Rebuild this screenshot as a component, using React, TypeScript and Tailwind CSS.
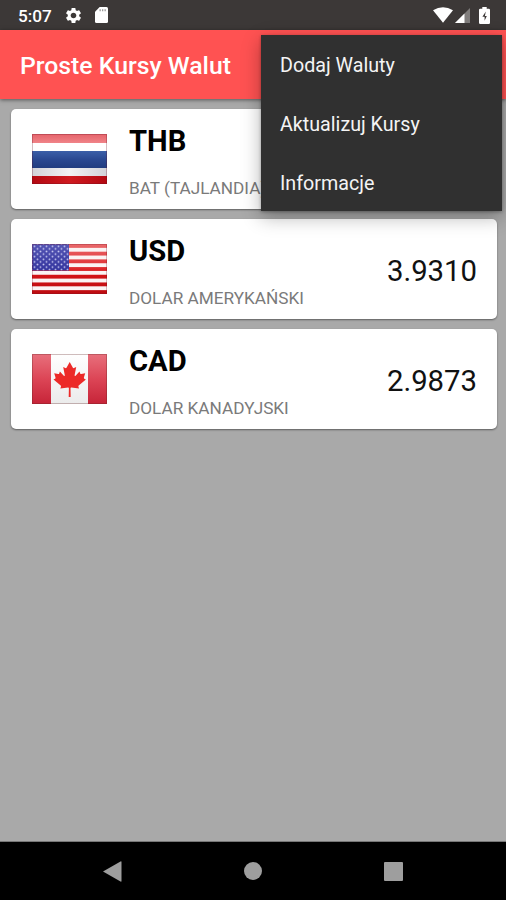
import type { ReactNode } from "react";
import { MdSettings } from "react-icons/md";

function ThaiFlag() {
  return (
    <svg className="block h-[50px] w-[75px]" viewBox="0 0 75 50">
      <defs>
        <linearGradient id="thTop" x1="0" y1="0" x2="0" y2="1">
          <stop offset="0" stopColor="#e5636a" />
          <stop offset="1" stopColor="#f08388" />
        </linearGradient>
        <linearGradient id="thBlue" x1="0" y1="0" x2="0" y2="1">
          <stop offset="0" stopColor="#3b5fa8" />
          <stop offset="0.5" stopColor="#2a4891" />
          <stop offset="1" stopColor="#213c80" />
        </linearGradient>
        <linearGradient id="thRed" x1="0" y1="0" x2="1" y2="0">
          <stop offset="0" stopColor="#b30912" />
          <stop offset="0.5" stopColor="#cf1a20" />
          <stop offset="1" stopColor="#b30912" />
        </linearGradient>
        <linearGradient id="thGrey" x1="0" y1="0" x2="1" y2="0">
          <stop offset="0" stopColor="#d2d2d8" />
          <stop offset="0.5" stopColor="#f2f2f4" />
          <stop offset="1" stopColor="#d2d2d8" />
        </linearGradient>
      </defs>
      <rect width="75" height="50" fill="#fff" />
      <rect width="75" height="9" fill="url(#thTop)" />
      <rect y="17" width="75" height="17" fill="url(#thBlue)" />
      <rect y="34" width="75" height="8" fill="url(#thGrey)" />
      <rect y="42" width="75" height="8" fill="url(#thRed)" />
      <rect x=".5" y=".5" width="74" height="49" fill="none" stroke="#601020" strokeOpacity=".28" />
    </svg>
  );
}

const stripes = [0, 1, 2, 3, 4, 5, 6];

function UsFlag() {
  return (
    <svg className="block h-[50px] w-[75px]" viewBox="0 0 75 50">
      <defs>
        <linearGradient id="usRed" gradientUnits="userSpaceOnUse" x1="0" y1="0" x2="0" y2="50">
          <stop offset="0" stopColor="#ea6a6c" />
          <stop offset="0.45" stopColor="#e03034" />
          <stop offset="0.6" stopColor="#d41316" />
          <stop offset="1" stopColor="#bd0c10" />
        </linearGradient>
        <linearGradient id="usBlue" x1="0" y1="0" x2="0" y2="1">
          <stop offset="0" stopColor="#5556b4" />
          <stop offset="1" stopColor="#34359f" />
        </linearGradient>
        <pattern id="usStars" width="6" height="5.2" patternUnits="userSpaceOnUse" x="1" y="1">
          <circle cx="1.5" cy="1.3" r=".95" fill="#c4c4ee" />
          <circle cx="4.5" cy="3.9" r=".95" fill="#c4c4ee" />
        </pattern>
      </defs>
      <rect width="75" height="50" fill="#fbf3f3" />
      {stripes.map((n) => (
        <rect key={n} y={n * 7.69} width="75" height="3.85" fill="url(#usRed)" />
      ))}
      <rect width="37" height="26.5" fill="url(#usBlue)" />
      <rect width="37" height="26.5" fill="url(#usStars)" />
      <rect x=".5" y=".5" width="74" height="49" fill="none" stroke="#701020" strokeOpacity=".28" />
    </svg>
  );
}

function CanadaFlag() {
  return (
    <svg className="block h-[50px] w-[75px]" viewBox="0 0 75 50">
      <defs>
        <linearGradient id="caRed" x1="0" y1="0" x2="0" y2="1">
          <stop offset="0" stopColor="#e8707c" />
          <stop offset="0.5" stopColor="#dc4556" />
          <stop offset="1" stopColor="#c62438" />
        </linearGradient>
        <linearGradient id="caWhite" x1="0" y1="0" x2="0" y2="1">
          <stop offset="0" stopColor="#fff" />
          <stop offset="1" stopColor="#ebebeb" />
        </linearGradient>
      </defs>
      <rect width="75" height="50" fill="url(#caWhite)" />
      <rect width="19" height="50" fill="url(#caRed)" />
      <rect x="56" width="19" height="50" fill="url(#caRed)" />
      <path
        fill="#ec2a28"
        d="M37.7 8L40.9 13.8Q41.3 14.4 42 14.1L44.2 13L42.6 21.2Q42.6 22.3 43.6 21.7L47.5 17.6L48.2 19.6Q48.5 20.2 49.2 20.1L53.2 19.3L51.9 23.6Q51.7 24.4 52.3 24.7L53.9 25.5L46.7 31.5Q46.2 31.9 46.4 32.5L47 34.5L39.4 33.5Q38.5 33.4 38.5 34.3L38.7 43H36.7L36.9 34.3Q36.9 33.4 36 33.5L28.4 34.5L29 32.5Q29.2 31.9 28.7 31.5L21.5 25.5L23.1 24.7Q23.7 24.4 23.5 23.6L22.2 19.3L26.2 20.1Q26.9 20.2 27.2 19.6L27.9 17.6L31.8 21.7Q32.8 22.3 32.8 21.2L31.2 13L33.4 14.1Q34.1 14.4 34.5 13.8Z"
      />
      <rect x=".5" y=".5" width="74" height="49" fill="none" stroke="#602020" strokeOpacity=".3" />
    </svg>
  );
}

type CardProps = { flag: ReactNode; code: string; name: string; rate: string };

function CurrencyCard({ flag, code, name, rate }: CardProps) {
  return (
    <li className="flex h-[100px] items-center rounded-[5px] bg-white pr-5 pl-[21px] shadow-[0_1px_2px_rgba(0,0,0,0.45)]">
      {flag}
      <div className="ml-[22px] flex h-full flex-1 flex-col pt-[14px] whitespace-nowrap">
        <h2 className="text-[29.2px] leading-[36px] font-bold text-black">{code}</h2>
        <p className="mt-[17px] text-[17.2px] leading-6 text-[#7a7a7a]">{name}</p>
      </div>
      <span className="pt-[3px] text-[29.3px] leading-9 text-[#111]">{rate}</span>
    </li>
  );
}

function StatusBar() {
  return (
    <div className="flex h-[30px] items-center bg-[#3c3837] pr-4 pl-[18px] text-white">
      <span className="pt-[2px] text-[17.2px] leading-7 font-medium">5:07</span>
      <MdSettings className="ml-[12px] size-[19px]" />
      <svg className="ml-[12px] h-4 w-[13px]" viewBox="0 0 13 16" fill="currentColor">
        <path d="M4.7 0H11.5Q13 0 13 1.5V14.5Q13 16 11.5 16H1.5Q0 16 0 14.5V4.8Z" />
        <path d="M4.5 2.2h1.3v2H4.5zM7 2.2h1.3v2H7zM9.5 2.2h1.3v2H9.5z" fill="#999" />
      </svg>
      <svg className="ml-auto h-4 w-5" viewBox="0 0 20 16" fill="currentColor">
        <path d="M0 3.2Q10-2.8 20 3.2L10 15.8Z" />
      </svg>
      <svg className="ml-[2px] size-[15px]" viewBox="0 0 15 15" fill="currentColor">
        <path d="M15 0V15H0Z" fillOpacity=".35" />
        <path d="M9.5 5.5V15H0Z" />
      </svg>
      <svg className="ml-[9px] h-[17px] w-[11px]" viewBox="0 0 11 17">
        <path
          d="M3.3 0h4.4v1.8H9.8Q11 1.8 11 3v12.8Q11 17 9.8 17H1.2Q0 17 0 15.8V3Q0 1.8 1.2 1.8H3.3Z"
          fill="#fff"
        />
        <path d="M6.8 4.5L3.4 9.8h2.2v4L7.8 8.9H5.9Z" fill="#3c3837" />
      </svg>
    </div>
  );
}

function OverflowMenu() {
  return (
    <ul className="absolute top-[35px] left-[261px] flex h-[176px] w-[241px] flex-col bg-[#303030] shadow-[0_6px_18px_rgba(0,0,0,0.3),0_1px_3px_rgba(0,0,0,0.3)]">
      {["Dodaj Waluty", "Aktualizuj Kursy", "Informacje"].map((label) => (
        <li
          key={label}
          className="flex h-[59px] shrink-0 items-center pt-[2px] pl-[19px] text-[19.7px] text-[#f4f4f4]"
        >
          {label}
        </li>
      ))}
    </ul>
  );
}

export default function App() {
  return (
    <div className="relative flex h-[900px] w-[506px] flex-col overflow-hidden bg-[#a9a9a9] font-['Roboto',sans-serif]">
      <StatusBar />
      <header className="flex h-[69px] items-center bg-[#ff5252] pl-5 shadow-[0_1px_4px_rgba(0,0,0,0.5)]">
        <h1 className="pt-[2px] text-[24.8px] font-medium text-white">Proste Kursy Walut</h1>
      </header>
      <main className="flex-1 border-b border-[#777] pt-[10px] pr-[9px] pl-[11px]">
        <ul className="flex flex-col gap-[10px]">
          <CurrencyCard flag={<ThaiFlag />} code="THB" name="BAT (TAJLANDIA)" rate="0.1236" />
          <CurrencyCard flag={<UsFlag />} code="USD" name="DOLAR AMERYKAŃSKI" rate="3.9310" />
          <CurrencyCard flag={<CanadaFlag />} code="CAD" name="DOLAR KANADYJSKI" rate="2.9873" />
        </ul>
      </main>
      <nav className="flex h-[58px] items-center justify-between bg-black px-[103px]">
        <svg className="h-[21px] w-[19px]" viewBox="0 0 19 21" fill="#9e9e9e">
          <path d="M0 10.5L17.5.5Q18.5 0 18.5 1V20Q18.5 21 17.5 20.5Z" />
        </svg>
        <div className="size-[18px] rounded-full bg-[#9e9e9e]" />
        <div className="size-[19px] rounded-[1px] bg-[#9e9e9e]" />
      </nav>
      <OverflowMenu />
    </div>
  );
}
